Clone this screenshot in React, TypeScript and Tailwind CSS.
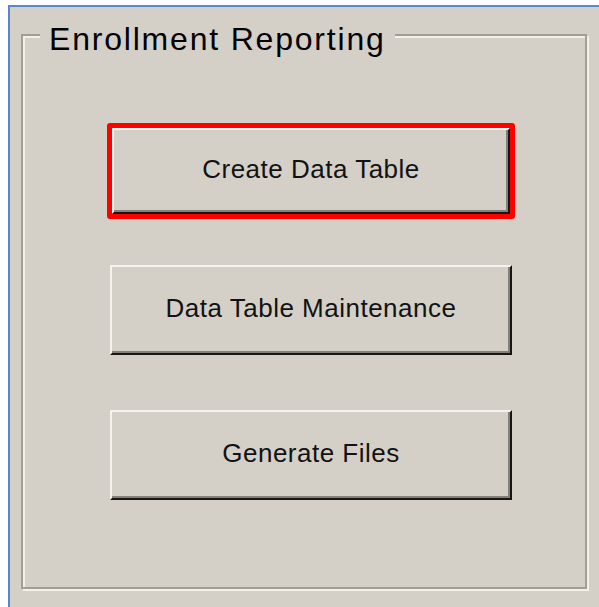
import { ReactNode } from 'react'

// Classic Windows-style push button: light top/left edge, two-step dark bottom/right edge
function PushButton({ children, className = '' }: { children: ReactNode; className?: string }) {
  return (
    <button
      type="button"
      className={`flex items-center justify-center bg-[#d4d0c8] border-2 border-t-[#f4f3ee] border-l-[#f4f3ee] border-r-[#161616] border-b-[#161616] shadow-[inset_-2px_-2px_0_#85817a] text-[26px] tracking-[0.5px] text-[#121212] ${className}`}
    >
      <span className="pb-[4px]">{children}</span>
    </button>
  )
}

export default function App() {
  return (
    <div className="h-[607px] w-[599px] bg-white pt-[5px] pl-[8px] overflow-hidden" style={{ fontFamily: '"Liberation Sans", Arial, sans-serif' }}>
      <div className="h-full w-full bg-[#d4d0c8] border-t-2 border-l-2 border-[#5a87cc]">
        {/* Etched group box */}
        <fieldset className="ml-[11px] mt-[6px] w-[566px] h-[576px] border-2 border-[#a29e92] shadow-[inset_2px_2px_0_#f2f0ea,2px_2px_0_#f2f0ea]">
          <legend className="ml-[17px] px-[9px] pt-[8px] bg-[#d4d0c8] text-[32px] leading-[36px] tracking-[1.8px] text-black">
            Enrollment Reporting
          </legend>

          <div className="flex flex-col pt-[66px]">
            {/* focused button, outlined in red */}
            <div className="ml-[84px] w-[408px] h-[96px] border-[5px] border-[#ff0000] rounded-[3px]">
              <PushButton className="w-full h-full border-t-[#d4d0c8] border-l-[#d4d0c8]">Create Data Table</PushButton>
            </div>

            <PushButton className="ml-[87px] mt-[46px] w-[402px] h-[90px]">Data Table Maintenance</PushButton>

            <PushButton className="ml-[87px] mt-[55px] w-[402px] h-[90px]">Generate Files</PushButton>
          </div>
        </fieldset>
      </div>
    </div>
  )
}
